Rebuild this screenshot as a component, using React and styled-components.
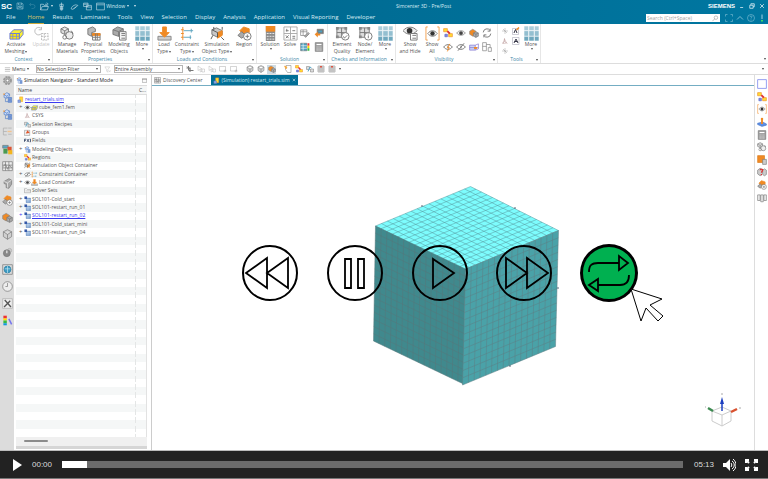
import styled, { createGlobalStyle } from "styled-components";

const GlobalStyle = createGlobalStyle`
  * {
    box-sizing: border-box;
  }
  body {
    margin: 0;
    background-color: #fff;
    font-family: "Open Sans", "Noto Sans", sans-serif;
    font-size: 5px;
    line-height: 7px;
    color: #444;
  }
  button {
    border: 0;
    padding: 0;
    margin: 0;
    background: none;
    font: inherit;
    color: inherit;
    cursor: pointer;
  }
  svg {
    display: block;
    flex: none;
  }
`;

const gray = "#777";
const orange = "#f08a24";

/* every drawing sits on a 16 x 16 grid */
const drawings = {
  save: <path d="M2 2h10l2 2v10H2zM5 2v4h6V2M4 14V9h8v5M6 11h4" />,
  undo: <path d="M4 5h6a4 4 0 0 1 0 8H7M6 2 3 5l3 3" opacity=".4" />,
  open: <path d="M1 14V4h5l1 2h6v2M1 14l3-6h11l-2 6zM9 4h5M12 1l3 3" />,
  touch: <path d="M8 1v14M5 4h6v4H5zM6 8v6h4V8M5 11h6" />,
  brush: <path d="M2 12c1-4 4-6 8-7l4 1-3 3c-4 0-3 4-7 4zM6 13l5-5" />,
  copy: <path d="M1 2h8v6H1zM6 6h9v8H6zM1 4h8M6 9h9" />,
  window: <path d="M1 2h14v12H1zM1 5h14" />,
  search: <><circle cx="9" cy="6" r="4" /><path d="m6 9-5 5" /></>,
  fit: <path d="M1 5V1h4M11 1h4v4M15 11v4h-4M5 15H1v-4" />,
  up: <path d="m2 11 6-6 6 6" strokeWidth="1.5" />,
  help: <><circle cx="8" cy="8" r="7" /><path d="M6 6c0-3 5-2 4 0-.5 1-2 1.5-2 3M8 11v2" /></>,
  alert: <><path d="M8 1v9" strokeWidth="2" /><path d="M8 12v3" stroke="#5f5" strokeWidth="3" /></>,
  minimise: <path d="M3 12h8" strokeWidth="2" />,
  restore: <path d="M5 5V2h9v8h-3M2 6h9v8H2z" strokeWidth="2" />,
  close: <path d="m3 3 10 10M13 3 3 13" strokeWidth="2" />,
  menu: <path d="M2 4h12M2 8h12M2 12h12" />,
  filter: <path d="M2 2h11L9 8v6l-3-2V8zM11 10l4 4M15 10l-4 4" />,
  mesh: (
    <>
      <path d="m1 8 4-4h10l-4 4zM11 8v6l4-5V4" fill="#f9ef35" stroke="#6a79d8" />
      <path d="M1 8h10v6H1z" fill="#ffe900" stroke="#6a79d8" />
      <path d="M1 11h10M4 8v6M8 8v6" stroke="#8892c4" />
    </>
  ),
  update: (
    <g opacity=".5">
      <path d="M8 3a4 4 0 1 0 0 5M8 1v3H5" />
      <path d="M8 8h7v7H8zM8 11h7M11 8v7" strokeDasharray="2 1" />
    </g>
  ),
  materials: (
    <>
      <path d="m5 1 4 2v4L5 9 1 7V3zM1 3l4 2 4-2M5 5v4" fill="#ddd" />
      <circle cx="10" cy="10" r="4" fill="#eee" />
      <circle cx="5" cy="12" r="2" />
      <path d="m12 5 2 3" />
    </>
  ),
  physical: (
    <>
      <path d="m2 3 5-2 3 2v3l-4 1v4l-4-2z" fill="#bbb" />
      <path d="M7 8h8v7H7z" fill="#fff" />
      <path d="M7 8h8v2H7z" fill={orange} stroke={orange} />
      <path d="M7 12h8M10 8v7M12 8v7" />
    </>
  ),
  modeling: (
    <>
      <path d="m1 4 5-3 6 2v4l-5 4-6-2z" fill="#aaa" />
      <path d="m1 4 6 2 5-3M7 6v5" />
      <path d="M8 6h7v9H8z" fill="#f4f4f4" />
      <path d="M10 8h4M10 10h4M10 13h4" />
    </>
  ),
  more: (
    <g stroke="#fff" strokeWidth=".6">
      <path d="M0 0h5v5H0zM5 0h6v5H5zM11 0h5v5h-5z" fill="#a9cdda" />
      <path d="M0 5h5v6H0zM5 5h6v6H5zM11 5h5v6h-5z" fill="#93bfd0" />
      <path d="M0 11h5v5H0zM5 11h6v5H5zM11 11h5v5h-5z" fill="#6fa8be" />
    </g>
  ),
  load: (
    <>
      <path d="M1 11h14v4H1z" fill="#ccc" stroke="#888" />
      <path d="M6 1h4v6h3l-5 5-5-5h3z" fill={orange} stroke={orange} />
    </>
  ),
  constraint: (
    <>
      <path d="M3 1v14M1 4h3M1 8h3M1 12h3" stroke={orange} />
      <path d="M4 5h10M12 3v4M4 12h8M11 10v4" stroke="#5ba3bf" />
    </>
  ),
  simObject: (
    <>
      <path d="m2 4 5-2 6 3v4l-5 3-6-3z" fill="#c8c8c8" />
      <path d="m8 7 5-2v5l-5 3z" fill={orange} stroke={orange} />
      <path d="m2 4 6 3v5M4 1v3M13 1v3M3 10l-2 4M12 12l3 3" stroke="#555" />
    </>
  ),
  region: (
    <>
      <path d="m3 5 4-4 6 2v4l-5 3z" fill={orange} stroke={orange} />
      <path d="m1 10 4-4 4 4-4 3z" fill="#aaa" />
      <circle cx="11" cy="11" r="4" fill="#fff" />
      <path d="M11 9v4M9 11h4" />
    </>
  ),
  solution: (
    <>
      <path d="M3 0h10v16H3z" fill="#8c8c8c" stroke="none" />
      <path d="M3 0h10v6H3z" fill={orange} stroke="none" />
      <path d="M4 8h8M4 11h8M4 14h8" stroke="#eee" strokeDasharray="2 1" />
    </>
  ),
  solve: (
    <>
      <path d="M1 1h14v14H1zM8 1v14M1 8h14" stroke="#aaa" />
      <path d="M3 5h3M4 3v3M10 5h3M3 10l3 3M6 10l-3 3M10 11h3M10 13h3" />
    </>
  ),
  report: <><path d="M1 3h10v9H1zM1 6h10M5 3v9" /><path d="m7 13 6-6 2 2-6 6z" fill="#aaa" /></>,
  import: (
    <>
      <path d="M5 2h10v7H5z" fill="#777" />
      <path d="M7 4h6v3H7z" fill="#4aa0c0" stroke="none" />
      <path d="m1 10 5-4v3h4v3H6v3z" fill={orange} stroke="none" />
    </>
  ),
  results: (
    <>
      <path d="M1 2h10v12H1z" fill="#4aa0c0" />
      <path d="M1 6h10M1 10h10M5 2v12" stroke="#fff" />
      <path d="M12 2h3v4h-3z" fill="#e33" stroke="none" />
      <path d="M12 6h3v4h-3z" fill="#fd0" stroke="none" />
      <path d="M12 10h3v4h-3z" fill="#3b4" stroke="none" />
    </>
  ),
  calc: (
    <>
      <path d="M2 1h12v14H2z" fill="#999" />
      <path d="M4 3h8v2H4z" fill="#fff" stroke="none" />
      <path d="M4 8h8M4 11h8M4 13h8" stroke="#fff" strokeDasharray="2 1" />
    </>
  ),
  quality: (
    <>
      <path d="M2 2h10v10H2zM7 2v10M2 7h10" fill="#ddd" />
      <path d="M1 1h3v3H1zM10 1h3v3h-3zM1 10h3v3H1z" fill="#888" stroke="none" />
      <circle cx="11" cy="11" r="4" fill="#fff" />
      <path d="m9 11 1 2 3-3" />
    </>
  ),
  node: (
    <>
      <path d="M2 2h10v10H2zM7 2v10M2 7h10" fill="#ddd" />
      <path d="M1 1h3v3H1zM10 1h3v3h-3zM1 10h3v3H1z" fill="#888" stroke="none" />
      <circle cx="11" cy="11" r="4" fill="#fff" />
      <path d="M11 8v1M11 10v3" />
    </>
  ),
  showHide: (
    <>
      <path d="M0 5c4-5 11-5 15 0-4 5-11 5-15 0z" fill="#eee" />
      <circle cx="7" cy="5" r="3" fill="#333" stroke="none" />
      <path d="M8 8h7v7H8z" fill="#fff" />
      <path d="M10 10h4M10 13h4" />
    </>
  ),
  eyeAll: (
    <>
      <path d="M3 1H1v14h2M13 1h2v14h-2" stroke={orange} opacity=".8" />
      <path d="M3 8c3-4 7-4 10 0-3 4-7 4-10 0z" fill="#fff" />
      <circle cx="8" cy="8" r="2.4" fill="#333" stroke="none" />
    </>
  ),
  eye: (
    <>
      <path d="M1 8c4-5 10-5 14 0-4 5-10 5-14 0z" fill="#eee" />
      <circle cx="8" cy="8" r="3" fill="#444" stroke="none" />
    </>
  ),
  eyeOff: <path d="M1 8c4-5 10-5 14 0-4 5-10 5-14 0zM8 6v4M3 14 13 2" strokeWidth="1.5" />,
  eyeBolt: (
    <>
      <path d="M1 8c4-5 10-5 14 0-4 5-10 5-14 0zM8 6v4" strokeWidth="1.5" />
      <path d="m11 3-4 6h3l-3 6" stroke={orange} strokeWidth="1.5" />
    </>
  ),
  blocks: (
    <>
      <path d="M1 1h6v5H1z" fill="#fd3" stroke={orange} />
      <path d="M9 9h6v5H9z" fill="#fd3" stroke={orange} />
      <path d="m7 5 4 4" stroke="#d33" strokeWidth="3" />
      <path d="M3 10h4v4H3z" fill="#88d" stroke="#56c" />
    </>
  ),
  boxes: (
    <>
      <path d="m1 5 5-3 5 3v5l-5 3-5-3z" fill={orange} stroke="#888" />
      <path d="m7 8 4-2 4 2v5l-4 2-4-2z" fill="#aaa" />
      <path d="m7 8 4 2 4-2M11 10v5" />
    </>
  ),
  refresh: <path d="M2 7a6 6 0 0 1 11-3M14 9a6 6 0 0 1-11 3M13 1v4H9M3 15v-4h4" strokeWidth="1.5" />,
  section: (
    <>
      <path d="M1 5h9v8H1z" fill="#cfd6f5" stroke="#76c" />
      <path d="m10 5 5-2v8l-5 2M1 9h14" stroke="#76c" />
      <path d="M8 8h5v3H8z" fill={orange} stroke="none" />
    </>
  ),
  panes: <path d="M1 1h6v13H1zM7 4h6v5M10 9h5v6h-5zM7 7H1" />,
  spark: <path d="M8 2v12M2 8h12M4 4l8 8" opacity=".7" />,
  note: <><path d="M1 1h13v14H1z" stroke="#99a" /><path d="m4 12 4-8 4 8M5 9h6" stroke="#334" strokeWidth="2" /></>,
  noteStar: <><path d="M1 3h12v12H1z" stroke="#99a" /><path d="m4 12 3-7 3 7" stroke="#334" strokeWidth="2" /><path d="m9 6 5-5" stroke={orange} strokeWidth="3" /></>,
  snap: <path d="M5 2v8M1 6h8M8 6v8M5 11h10M2 3l6 6" strokeWidth="2" />,
  cursorBox: <><path d="M2 2v9l3-2 2 5 2-1-2-5h3z" opacity=".5" /><path d="M10 8h5v6h-5z" opacity=".5" /></>,
  dashedBox: <path d="M1 3h12v9H1zM12 9v6M9 12h6" opacity=".6" />,
  shaded: <path d="m8 1 6 3v7l-6 4-6-4V4zM2 4l6 4 6-4M8 8v7" fill="#d0d0d0" />,
  doc: <><path d="M4 1h10v14H7L3 9z" fill="#fff" /><path d="m1 2 5 2-2 4z" fill="#fc3" stroke={orange} /></>,
  grid: <><path d="M2 2h12v12H2zM6 2v12M10 2v12M2 6h12M2 10h12" /><path d="M6 2h4v3H6z" fill="#d54" stroke="none" /></>,
  gear: <><circle cx="8" cy="8" r="5" fill="#bbb" stroke="#999" strokeWidth="3" strokeDasharray="3 1" /><circle cx="8" cy="8" r="2" fill="#fff" /></>,
  navigator: (
    <>
      <path d="M3 8V4l4-3 4 2v3L7 9z" fill="#cdddf8" stroke="#5580c8" />
      <path d="m3 4 4 2 4-3M7 6v3M5 9v5h4" stroke="#5580c8" />
      <path d="M9 8h5v3H9zM9 12h5v3H9z" fill="#7797d8" stroke="#5580c8" />
      <path d="M2 2h2v2H2z" fill={orange} stroke="none" />
    </>
  ),
  list: (
    <>
      <path d="M2 3h6M2 8h5M2 3v10h5M9 3h5M9 12h5" stroke="#aaa" />
      <path d="M8 7h6v2H8z" fill="#f3c38f" stroke="none" />
    </>
  ),
  chart: (
    <>
      <path d="M1 2h8v4H1z" fill="#58a6c8" />
      <path d="M8 4h6v6H8z" fill="#d53" stroke="none" />
      <path d="M2 7h6v7H2z" fill="#4a9a50" stroke="none" />
      <path d="M9 9h6v6H9z" fill="#f3b51d" stroke="none" />
    </>
  ),
  wave: <><path d="M1 1h14v13H1zM1 6h14M1 10h14" fill="#eee" /><path d="m2 8 3-4 3 8 3-6 3 4M5 1v13M10 1v13" /></>,
  part: <><path d="m3 5 7-4 4 2v6l-4 6-4-1V9L3 8z" fill="#aaa" /><path d="m3 5 5 2 6-4M8 7v7" stroke="#eee" /></>,
  bulb: <><circle cx="11" cy="5" r="3" fill="#ccc" stroke="#aaa" /><circle cx="7" cy="9" r="5" fill="#888" /><path d="M7 5v4" stroke="#ddd" strokeWidth="2" /></>,
  globe: <><path d="M1 1h14v14H1z" fill="#ddd" /><circle cx="8" cy="8" r="5" fill="#3d9cc4" stroke="#287a9f" /><path d="M4 7h8M8 3v10" stroke="#bfe6f4" /></>,
  clock: <><circle cx="8" cy="8" r="7" fill="#eee" /><path d="M8 3v5H5" /></>,
  tools: <><path d="M1 1h14v14H1z" fill="#eee" stroke="#aaa" /><path d="m3 13 9-9M4 3l9 10" stroke="#555" strokeWidth="2" /></>,
  palette: (
    <g stroke="none">
      <path d="M2 1h5v4H2z" fill="#e33" />
      <path d="M2 5h5v3H2z" fill="#fd0" />
      <path d="M2 8h5v4H2z" fill="#3b4" />
      <path d="M2 12h5v3H2z" fill="#19d" />
      <path d="m9 6 2-1 4 8-2 1z" fill="#77e" />
    </g>
  ),
  simFile: <><path d="M6 2h7v11H6z" fill="#fd3" stroke={orange} /><path d="M2 9h6v6H2z" fill="#8aa4e0" stroke="#5c78c0" /></>,
  csys: <path d="M7 2v7l-5 4M7 9l6 4M4 13l3-9 4 8z" stroke="#b99" />,
  recipe: <><path d="M1 3h6v6H1zM9 8h6v6H9z" fill="#ddd" /><path d="m4 13 4-9 3 2" stroke="#58a6c8" strokeWidth="2" /></>,
  group: <><path d="M1 3h12v12H1z" fill="#eee" /><path d="m4 10 4-7 5 6z" fill="#e2552a" stroke="none" /></>,
  field: <path d="M1 5h4M1 5v6M1 8h3M7 5l4 6M11 5l-4 6M13 5h2v6h-2" stroke="#346" strokeWidth="2" />,
  folder: <path d="M1 13V4h5l2 2h7v7zM3 9h12" fill="#fff" />,
  job: (
    <>
      <path d="M5 5h10v10H5z" fill="#7ba0d0" stroke="#4474b0" />
      <path d="M5 8h10M5 11h10M9 5v10" stroke="#dbe8f6" />
      <path d="M1 1h6v6H1z" fill="#3558a8" stroke="none" />
    </>
  ),
  square: <path d="M1 1h14v14H1z" fill="#fff" stroke="#5967e8" />,
  person: <><path d="m1 10 8-2 6 3v2l-7 2-7-3z" fill="#5d8fe4" stroke="#4978cc" /><path d="M8 4v7" stroke={orange} strokeWidth="3" /><circle cx="8" cy="3" r="2" fill={orange} stroke="none" /></>,
  orangeBox: <><path d="M1 1h11v11H1z" fill={orange} stroke="#d87714" /><path d="M9 7h6v8H9z" fill="#ccc" /></>,
  question: <><path d="m1 5 4-3 4 3v6l-4 3-4-3zM9 5l3-2 3 2v7l-3 2-3-2" fill="#ccc" /><path d="M5 5c0-2 5-2 4 0L7 9M7 11v2" stroke="#d33" strokeWidth="2" /></>,
  columns: <path d="M1 3h4v9H1zM6 3h4v11H6zM11 3h4v9h-4z" fill="#eee" />,
};

const Icon = ({ name, size = 9, color = gray }) => (
  <svg width={size} height={size} viewBox="0 0 16 16" fill="none" stroke={color} aria-hidden="true">
    {drawings[name]}
  </svg>
);

const Page = styled.div`
  min-height: 100vh;
  display: flex;
  flex-direction: column;
  overflow: hidden;
`;

const Header = styled.header`
  background: linear-gradient(90deg, #006389, #0077a1);
  color: #d9ecf3;
`;

const TitleBar = styled.div`
  display: grid;
  grid-template-columns: 5fr auto 4fr;
  align-items: center;
  height: 12px;
`;

const QuickAccess = styled.div`
  display: flex;
  align-items: center;
  gap: 4px;
  padding-left: 1px;
`;

const Brand = styled.span`
  font-family: "Liberation Sans", sans-serif;
  font-weight: bold;
  font-size: ${(props) => props.$size}px;
  color: #fff;
`;

const IconButton = styled.button`
  display: flex;
  align-items: center;
  justify-content: center;
  gap: 1px;
`;

const WindowControls = styled.div`
  display: flex;
  justify-content: flex-end;
  align-items: center;
  gap: 4px;
  padding-right: 3px;
`;

const TabRow = styled.nav`
  display: flex;
  align-items: center;
  height: 12px;
  padding: 0 2px 0 6px;
  font-size: 6px;
`;

const MenuTab = styled.button`
  height: 12px;
  margin-right: ${(props) => (props.$wide ? 12 : 8)}px;
  color: ${(props) => (props.$active ? "#d8c66a" : "#d9ecf3")};
  border-bottom: 1px solid ${(props) => (props.$active ? "#c9a93c" : "transparent")};
`;

const Tools = styled.div`
  display: flex;
  align-items: center;
  gap: 3px;
  margin-left: auto;
`;

const SearchBox = styled.label`
  display: flex;
  align-items: center;
  width: 74px;
  height: 8px;
  padding: 0 1px;
  margin-right: 2px;
  background-color: #fff;
`;

const SearchInput = styled.input`
  flex: 1;
  min-width: 0;
  border: 0;
  padding: 0;
  outline: 0;
  font: inherit;
  font-size: 5px;
  height: 7px;
  &::placeholder {
    color: #a3a3a3;
  }
`;

const Ribbon = styled.div`
  display: flex;
  height: 40px;
  border-bottom: 1px solid #ddd;
  background-color: #fff;
`;

const Group = styled.section`
  flex: none;
  width: ${(props) => props.$width}px;
  display: flex;
  flex-direction: column;
  justify-content: space-between;
  border-right: 1px solid #e6e6e6;
`;

const GroupTools = styled.div`
  display: flex;
  align-items: flex-start;
  padding: 2px 0 0 1px;
`;

const GroupTitle = styled.div`
  display: flex;
  align-items: center;
  padding-right: 2px;
`;

const GroupName = styled.span`
  flex: 1;
  text-align: center;
  white-space: nowrap;
  color: #3d88a8;
`;

const RibbonButton = styled.button`
  flex: none;
  width: ${(props) => props.$width}px;
  display: flex;
  flex-direction: column;
  align-items: center;
  white-space: nowrap;
  color: ${(props) => (props.disabled ? "#c4c4c4" : "#555")};
`;

const Caret = styled.span`
  display: inline-block;
  border: 1px solid transparent;
  border-top: 2px solid currentColor;
  border-bottom: 0;
  margin-left: 1px;
  vertical-align: middle;
`;

const IconGrid = styled.div`
  display: grid;
  grid-template-columns: repeat(${(props) => props.$cols}, ${(props) => props.$cell}px);
  grid-auto-rows: ${(props) => props.$row}px;
`;

const RibbonEnd = styled.div`
  flex: 1;
  display: flex;
  align-items: flex-end;
  justify-content: flex-end;
  padding: 3px 2px;
`;

const SelectionBar = styled.div`
  display: flex;
  align-items: center;
  gap: 2px;
  height: 11px;
  padding: 0 2px 0 4px;
  border-bottom: 1px solid #ddd;
`;

const MenuButton = styled.button`
  display: flex;
  align-items: center;
  gap: 1px;
  width: 30px;
`;

const SelectBox = styled.span`
  display: flex;
  align-items: center;
  width: ${(props) => props.$width}px;
  height: 8px;
  padding-right: 2px;
  border: 1px solid #b5b5b5;
`;

const Select = styled.select`
  flex: 1;
  min-width: 0;
  appearance: none;
  border: 0;
  padding: 0;
  background: none;
  font: inherit;
  line-height: 6px;
  height: 6px;
  color: #444;
`;

const BarIcon = styled(IconButton)`
  width: 9px;
  height: 9px;
  margin-left: ${(props) => (props.$gap ? 5 : 0)}px;
  background-color: ${(props) => (props.$active ? "#cfdbe2" : "transparent")};
`;

const Workspace = styled.div`
  flex: 1;
  display: flex;
  min-height: 0;
`;

const Rail = styled.nav`
  flex: none;
  width: 14px;
  background-color: ${(props) => (props.$side === "left" ? "#dcdcdc" : "#fff")};
  border-left: ${(props) => (props.$side === "left" ? "0" : "1px solid #ddd")};
`;

const RailTools = styled.div`
  display: flex;
  flex-direction: column;
  align-items: center;
  justify-content: space-between;
  height: ${(props) => props.$height};
  margin-top: ${(props) => props.$top}px;
`;

const Panel = styled.aside`
  flex: none;
  width: 138px;
  display: flex;
  flex-direction: column;
  padding: 0 4px 0 2px;
  border-right: 1px solid #ccc;
`;

const PanelTitle = styled.div`
  display: flex;
  align-items: center;
  height: 10px;
  color: #222;
  span {
    flex: 1;
    padding-left: 1px;
  }
`;

const ColumnHeader = styled.div`
  display: flex;
  justify-content: space-between;
  height: 10px;
  padding: 1px 1px 0 2px;
  border: 1px solid #ddd;
  border-width: 1px 0;
  background-color: #f5f6f6;
`;

const Tree = styled.ul`
  flex: 1;
  display: grid;
  grid-template-rows: repeat(41, 1fr);
  margin: 0;
  padding: 0;
  list-style: none;
  border-right: 1px solid #e2e2e2;
`;

const TreeRow = styled.li`
  display: flex;
  align-items: center;
  min-height: 0;
  padding-left: ${(props) => props.$indent}px;
  margin-right: 10px;
  border-right: 1px dashed #e4e6e6;
  box-shadow: 10px 0 0 ${(props) => (props.$tinted ? "#f5f7f7" : "#fff")};
  background-color: ${(props) => (props.$tinted ? "#f5f7f7" : "#fff")};
  color: ${(props) => (props.$active ? "#3a3af0" : "#555")};
  white-space: nowrap;
`;

const RowText = styled.span`
  padding-left: 1px;
  text-decoration: ${(props) => (props.$active ? "underline" : "none")};
`;

const Expander = styled.span`
  width: 5px;
  font-size: 6px;
`;

const ScrollBar = styled.div`
  height: 9px;
  padding: 3px 8px;
  background-color: #f0f0f0;
`;

const ScrollThumb = styled.div`
  width: 24px;
  height: 2px;
  border-radius: 1px;
  background-color: #8c8c8c;
`;

const PanelFoot = styled.div`
  height: 3px;
  margin-bottom: 1px;
  background-color: #d6d6d6;
`;

const Main = styled.main`
  flex: 1;
  min-width: 0;
  display: flex;
  flex-direction: column;
`;

const DocTabs = styled.div`
  display: flex;
  height: 11px;
  border-bottom: 1px solid #74adc3;
`;

const DocTab = styled.button`
  display: flex;
  align-items: center;
  gap: 2px;
  padding: 0 2px;
  margin-right: 6px;
  white-space: nowrap;
  color: ${(props) => (props.$active ? "#cfe8f0" : "#555")};
  background-color: ${(props) => (props.$active ? "#006e96" : "transparent")};
`;

const Viewport = styled.div`
  position: relative;
  flex: 1;
  min-height: 0;
  > svg {
    width: 100%;
    height: 100%;
  }
`;

const Playback = styled.div`
  position: absolute;
  top: 159px;
  left: 90px;
  width: 395px;
  display: flex;
  justify-content: space-between;
`;

const RoundButton = styled.button`
  width: 56px;
  height: 56px;
  border: 2px solid #000;
  border-radius: 50%;
  background-color: ${(props) => (props.$active ? "#00b050" : "transparent")};
  box-shadow: ${(props) => (props.$active ? "0 0 0 1px #000" : "none")};
`;

const Pointer = styled.svg`
  position: absolute;
  left: 100%;
  top: 43px;
  margin-left: -7px;
`;

const Player = styled.footer`
  display: flex;
  align-items: center;
  height: 29px;
  padding: 0 10px 0 11px;
  background-color: #222;
  border-top: 1px solid #bbb;
  border-bottom: 1px solid #777;
  color: #ddd;
  font-family: "Liberation Sans", sans-serif;
  font-size: 8px;
  line-height: 10px;
`;

const Time = styled.span`
  width: 20px;
  margin: 0 9px;
`;

const Seek = styled.input`
  flex: 1;
  min-width: 0;
  appearance: none;
  height: 7px;
  margin: 0 2px 0 1px;
  background: linear-gradient(90deg, #fff 4%, #6b6b6b 4%);
  &::-webkit-slider-thumb {
    appearance: none;
    width: 1px;
    height: 7px;
  }
`;

const PlayerButtons = styled.div`
  display: flex;
  gap: 9px;
`;

const menuTabs = [
  "File", "Home", "Results", "Laminates", "Tools", "View", "Selection", "Display",
  "Analysis", "Application", "Visual Reporting", "Developer",
];

const groups = [
  { title: "Context", width: 53, items: [
    { icon: "mesh", lines: ["Activate", "Meshing"], caret: true, width: 30 },
    { icon: "update", lines: ["Update"], width: 20, disabled: true },
  ] },
  { title: "Properties", width: 100, items: [
    { icon: "materials", lines: ["Manage", "Materials"], width: 26 },
    { icon: "physical", lines: ["Physical", "Properties"], width: 26 },
    { icon: "modeling", lines: ["Modeling", "Objects"], width: 26 },
    { icon: "more", lines: ["More"], below: true, width: 20 },
  ] },
  { title: "Loads and Conditions", width: 104, items: [
    { icon: "load", lines: ["Load", "Type"], caret: true, width: 20 },
    { icon: "constraint", lines: ["Constraint", "Type"], caret: true, width: 26 },
    { icon: "simObject", lines: ["Simulation", "Object Type"], caret: true, width: 34 },
    { icon: "region", lines: ["Region"], width: 20 },
  ] },
  { title: "Solution", width: 71, items: [
    { icon: "solution", lines: ["Solution"], below: true, width: 24 },
    { icon: "solve", lines: ["Solve"], width: 16 },
    { grid: ["report", "import", "results", "calc"], cols: 2, cell: 14, row: 14, size: 10 },
  ] },
  { title: "Checks and Information", width: 68, items: [
    { icon: "quality", lines: ["Element", "Quality"], width: 26 },
    { icon: "node", lines: ["Node/", "Element"], width: 20 },
    { icon: "more", lines: ["More"], below: true, width: 20 },
  ] },
  { title: "Visibility", width: 102, items: [
    { icon: "showHide", lines: ["Show", "and Hide"], width: 26 },
    { icon: "eyeAll", lines: ["Show", "All"], width: 18 },
    { grid: ["blocks", "eye", "boxes", "refresh", "eyeBolt", "eyeOff", "section", "panes"], cols: 4, cell: 13, row: 14, size: 10 },
  ] },
  { title: "Tools", width: 43, items: [
    { grid: ["spark", "noteStar", "csys", "note", "spark"], cols: 2, cell: 11, row: 10, size: 8 },
    { icon: "more", lines: ["More"], below: true, width: 20 },
  ] },
];

const leftRail = [
  "gear", "navigator", "navigator", "list", "chart", "wave", "part", "region",
  "boxes", "shaded", "bulb", "globe", "clock", "tools", "palette",
];

const rightRail = [
  "square", "blocks", "eyeAll", "person", "calc", "materials", "orangeBox",
  "question", "region", "columns",
];

const treeRows = [
  { icons: ["simFile"], text: "restart_trials.sim", active: true, indent: 1 },
  { plus: true, icons: ["eye", "mesh"], text: "cube_fem1.fem" },
  { icons: ["csys"], text: "CSYS" },
  { icons: ["recipe"], text: "Selection Recipes" },
  { icons: ["group"], text: "Groups" },
  { icons: ["field"], text: "Fields" },
  { plus: true, icons: ["navigator"], text: "Modeling Objects" },
  { icons: ["blocks"], text: "Regions" },
  { icons: ["simObject"], text: "Simulation Object Container" },
  { plus: true, icons: ["eyeOff", "constraint"], text: "Constraint Container" },
  { plus: true, icons: ["eye", "load"], text: "Load Container" },
  { icons: ["folder"], text: "Solver Sets" },
  { plus: true, icons: ["job"], text: "SOL101-Cold_start" },
  { plus: true, icons: ["job"], text: "SOL101-restart_run_01" },
  { plus: true, icons: ["job"], text: "SOL101-restart_run_02", active: true },
  { plus: true, icons: ["job"], text: "SOL101-Cold_start_mini" },
  { plus: true, icons: ["job"], text: "SOL101-restart_run_04" },
];

const emptyRows = Array.from({ length: 41 - treeRows.length }, (_, i) => i);

const playback = [
  { label: "Rewind", path: "M25 13 4 28l21 15zM46 13 25 28l21 15z" },
  { label: "Pause", path: "M18 14h6v29h-6zM31 14h6v29h-6z" },
  { label: "Play", path: "M21 14v29l21-15z" },
  { label: "Fast forward", path: "M10 13v30l21-15zM31 13v30l21-15z" },
  { label: "Loop", active: true, path: "M8 27c0-7 3-9 9-9h21M38 11v14l9-7zM48 30c0 7-3 10-9 10H17M17 34v12l-9-6z" },
];

/* one face of the cube: a corner, its two edge vectors and the mesh lines between */
const DIVISIONS = 16;
const Face = ({ corner: [x, y], u, v, fill, line }) => {
  let mesh = "";
  for (let i = 0; i <= DIVISIONS; i++) {
    const t = i / DIVISIONS;
    mesh += `M${x + u[0] * t} ${y + u[1] * t}l${v[0]} ${v[1]}`;
    mesh += `M${x + v[0] * t} ${y + v[1] * t}l${u[0]} ${u[1]}`;
  }
  return (
    <>
      <path d={`M${x} ${y}l${u[0]} ${u[1]} ${v[0]} ${v[1]} ${-u[0]} ${-u[1]}z`} fill={fill} />
      <path d={mesh} stroke={line} strokeWidth=".5" />
    </>
  );
};

const Scene = () => (
  <svg viewBox="152 86 602 364" fill="none">
    <Face corner={[470.5, 186.5]} u={[88, 44]} v={[-95, 39.5]} fill="#7dfcfd" line="#56969d" />
    <Face corner={[375.5, 226]} u={[90, 43]} v={[-2, 115]} fill="#40898d" line="#56777b" />
    <Face corner={[465.5, 269]} u={[93, -38.5]} v={[-3, 116]} fill="#4aa2a8" line="#5f7f85" />
    <path d="M421 206h2M514 208h2M557 288h2M509 366h2" stroke="#567" />
    <path d="m722 407 9 4v10l-9 5-10-5v-10zM712 411l10 4 9-4M722 415v11" stroke="#ccc" />
    <path d="M722 411v-8" stroke="#1c3fc0" strokeWidth="1.5" />
    <path d="m720 404 2-7 2 7z" fill="#1c3fc0" />
    <path d="m708 408 5 3" stroke="#3c8a50" strokeWidth="2.5" />
    <path d="m731 412 6-3" stroke="#d8502e" strokeWidth="2.5" />
    <path d="M721 394h2M705 407h1M739 408h2" stroke="#aaa" />
  </svg>
);

const RibbonItem = ({ item }) => {
  if (item.grid) {
    return (
      <IconGrid $cols={item.cols} $cell={item.cell} $row={item.row}>
        {item.grid.map((name, i) => (
          <IconButton key={i} aria-label={name}>
            <Icon name={name} size={item.size} />
          </IconButton>
        ))}
      </IconGrid>
    );
  }
  return (
    <RibbonButton $width={item.width} disabled={item.disabled}>
      <Icon name={item.icon} size={15} />
      {item.lines.map((line, i) => (
        <span key={line}>
          {line}
          {item.caret && i === 1 && <Caret />}
        </span>
      ))}
      {item.below && <Caret />}
    </RibbonButton>
  );
};

const App = () => (
  <Page>
    <GlobalStyle />
    <Header>
      <TitleBar>
        <QuickAccess>
          <Brand $size={8}>SC</Brand>
          <IconButton aria-label="Save"><Icon name="save" size={8} color="#a9d0df" /></IconButton>
          <IconButton aria-label="Undo"><Icon name="undo" size={8} color="#a9d0df" /></IconButton>
          <IconButton aria-label="Open"><Icon name="open" color="#d9ecf3" /><Caret /></IconButton>
          <IconButton aria-label="Touch"><Icon name="touch" color="#d9ecf3" /></IconButton>
          <IconButton aria-label="Brush"><Icon name="brush" color="#d9ecf3" /></IconButton>
          <IconButton aria-label="Copy"><Icon name="copy" color="#d9ecf3" /></IconButton>
          <IconButton><Icon name="window" color="#d9ecf3" />Window<Caret /></IconButton>
          <Caret />
        </QuickAccess>
        <span>Simcenter 3D - Pre/Post</span>
        <WindowControls>
          <Brand $size={6}>SIEMENS</Brand>
          {["minimise", "restore", "close"].map((name) => (
            <IconButton key={name} aria-label={name}>
              <Icon name={name} size={6} color="#e6f3f8" />
            </IconButton>
          ))}
        </WindowControls>
      </TitleBar>
      <TabRow>
        {menuTabs.map((tab) => (
          <MenuTab key={tab} $active={tab === "Home"} $wide={tab === "File"}>{tab}</MenuTab>
        ))}
        <Tools>
          <SearchBox>
            <SearchInput type="text" placeholder="Search (Ctrl+Space)" aria-label="Search" />
            <Icon name="search" size={7} />
          </SearchBox>
          {["fit", "up", "help", "alert"].map((name) => (
            <IconButton key={name} aria-label={name}>
              <Icon name={name} size={8} color="#9fd0e2" />
            </IconButton>
          ))}
        </Tools>
      </TabRow>
    </Header>

    <Ribbon>
      {groups.map((group) => (
        <Group key={group.title} $width={group.width}>
          <GroupTools>
            {group.items.map((item, i) => (
              <RibbonItem key={i} item={item} />
            ))}
          </GroupTools>
          <GroupTitle>
            <GroupName>{group.title}</GroupName>
            <Caret />
          </GroupTitle>
        </Group>
      ))}
      <RibbonEnd><Caret /></RibbonEnd>
    </Ribbon>

    <SelectionBar>
      <MenuButton>
        <Icon name="menu" size={7} />Menu<Caret />
      </MenuButton>
      <SelectBox $width={65}>
        <Select aria-label="Selection filter">
          <option>No Selection Filter</option>
        </Select>
        <Caret />
      </SelectBox>
      <BarIcon aria-label="Clear filter"><Icon name="filter" size={7} color="#bbb" /></BarIcon>
      <SelectBox $width={69}>
        <Select aria-label="Selection scope">
          <option>Entire Assembly</option>
        </Select>
        <Caret />
      </SelectBox>
      {["snap", "cursorBox", "cursorBox", "dashedBox", "dashedBox", "shaded", "shaded", "boxes"].map((name, i) => (
        <BarIcon key={i} aria-label={name} $active={i === 7} $gap={i === 5}>
          <Icon name={name} size={8} />
        </BarIcon>
      ))}
      {["doc", "blocks", "recipe", "grid", "grid"].map((name, i) => (
        <BarIcon key={i} aria-label={name} $gap={i === 0}>
          <Icon name={name} size={8} />
        </BarIcon>
      ))}
      <Caret />
      <RibbonEnd><Caret /></RibbonEnd>
    </SelectionBar>

    <Workspace>
      <Rail $side="left">
        <RailTools $height="67%" $top={0}>
          {leftRail.map((name, i) => (
            <IconButton key={i} aria-label={name}>
              <Icon name={name} size={11} />
            </IconButton>
          ))}
        </RailTools>
      </Rail>

      <Panel>
        <PanelTitle>
          <Icon name="navigator" size={7} />
          <span>Simulation Navigator - Standard Mode</span>
          <IconButton aria-label="Undock"><Icon name="window" size={5} color="#333" /></IconButton>
        </PanelTitle>
        <ColumnHeader>
          <span>Name</span>
          <span>C...</span>
        </ColumnHeader>
        <Tree>
          {treeRows.map((row, i) => (
            <TreeRow
              key={row.text}
              $indent={row.indent ?? (row.plus ? 3 : 8)}
              $tinted={i % 2 === 1}
              $active={row.active}
            >
              {row.plus && <Expander>+</Expander>}
              {row.icons.map((name) => (
                <Icon key={name} name={name} size={7} />
              ))}
              <RowText $active={row.active}>{row.text}</RowText>
            </TreeRow>
          ))}
          {emptyRows.map((i) => (
            <TreeRow key={i} $tinted={i % 2 === 0} />
          ))}
        </Tree>
        <ScrollBar><ScrollThumb /></ScrollBar>
        <PanelFoot />
      </Panel>

      <Main>
        <DocTabs>
          <DocTab>
            <Icon name="wave" size={7} />
            Discovery Center
          </DocTab>
          <DocTab $active>
            <Icon name="simFile" size={7} />
            (Simulation) restart_trials.sim
            <Icon name="close" size={4} color="#fff" />
          </DocTab>
        </DocTabs>
        <Viewport>
          <Scene />
          <Playback>
            {playback.map(({ label, path, active }) => (
              <RoundButton key={label} aria-label={label} $active={active}>
                <svg width="52" height="52" viewBox="2 2 52 52" fill="none" stroke="#000" strokeWidth="1.8">
                  <path d={path} />
                </svg>
              </RoundButton>
            ))}
            <Pointer width="36" height="36" viewBox="0 0 36 36">
              <path d="m1 1 31 10-12 6 13 11-5 5-12-13-5 13z" fill="#fff" stroke="#000" />
            </Pointer>
          </Playback>
        </Viewport>
      </Main>

      <Rail $side="right">
        <RailTools $height="33%" $top={4}>
          {rightRail.map((name) => (
            <IconButton key={name} aria-label={name}>
              <Icon name={name} size={10} />
            </IconButton>
          ))}
        </RailTools>
      </Rail>
    </Workspace>

    <Player>
      <IconButton aria-label="Play video">
        <svg width="12" height="12" viewBox="0 0 12 12" fill="#fff">
          <path d="M2 0v12l9-6z" />
        </svg>
      </IconButton>
      <Time>00:00</Time>
      <Seek type="range" min="0" max="313" defaultValue="0" aria-label="Seek" />
      <Time>05:13</Time>
      <PlayerButtons>
        <IconButton aria-label="Volume">
          <svg width="13" height="12" viewBox="0 0 13 12" fill="#fff" stroke="#fff">
            <path d="M0 4h3l4-4v12L3 8H0z" stroke="none" />
            <path d="M8 4c1 1 1 3 0 4M9 2c3 2 3 6 0 8M10 0c4 3 4 9 0 12" fill="none" />
          </svg>
        </IconButton>
        <IconButton aria-label="Full screen">
          <svg width="13" height="12" viewBox="0 0 13 12" fill="none" stroke="#fff" strokeWidth="2">
            <path d="M1 4V1h3M9 1h3v3M12 8v3H9M4 11H1V8M1 1l3 3M12 1 9 4M12 11 9 8M1 11l3-3" />
          </svg>
        </IconButton>
      </PlayerButtons>
    </Player>
  </Page>
);

export default App;
